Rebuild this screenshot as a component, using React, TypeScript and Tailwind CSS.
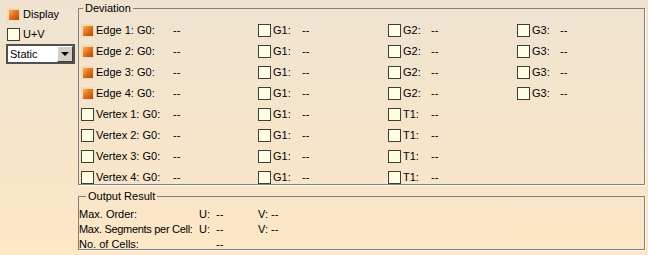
const font = "font-['Liberation_Sans',Arial,sans-serif]";

function Box({ checked = false }: { checked?: boolean }) {
  if (checked)
    return (
      <span className="flex h-[13px] w-[13px] shrink-0 items-center justify-center border border-[#f3d9b6] bg-[#f7e3c6]">
        <span className="h-[11px] w-[11px] bg-linear-to-br from-[#f9b874] via-[#e2761f] to-[#ad4a0e] shadow-[inset_1px_1px_0_#fcd6a8]" />
      </span>
    );
  return <span className="h-[13px] w-[13px] shrink-0 border border-[#3e3e3e] bg-[#ffffe1]" />;
}

function Cell({ label, w, checked }: { label: string; w: string; checked?: boolean }) {
  return (
    <div className="flex h-[21px] items-center">
      <Box checked={checked} />
      <span className={`ml-[2px] ${w}`}>{label}</span>
      <span>--</span>
    </div>
  );
}

const rows = [
  { name: "Edge 1", last: "G3", checked: true },
  { name: "Edge 2", last: "G3", checked: true },
  { name: "Edge 3", last: "G3", checked: true },
  { name: "Edge 4", last: "G3", checked: true },
  { name: "Vertex 1", last: "", checked: false },
  { name: "Vertex 2", last: "", checked: false },
  { name: "Vertex 3", last: "", checked: false },
  { name: "Vertex 4", last: "", checked: false },
];

export default function App() {
  return (
    <div
      className={`flex h-[255px] w-[648px] bg-linear-to-b from-[#efe3d0] to-[#fde7c6] text-[11px] leading-[13px] text-black ${font}`}
    >
      {/* left options */}
      <div className="flex w-[78px] shrink-0 flex-col pl-[7px] pt-[8px]">
        <div className="flex items-center">
          <Box checked />
          <span className="ml-[3px]">Display</span>
        </div>
        <div className="mt-[7px] flex items-center">
          <Box />
          <span className="ml-[3px]">U+V</span>
        </div>
        <div className="mt-[3px] flex h-[20px] w-[69px] -ml-[1px] border-2 border-[#505050] bg-white">
          <span className="flex-1 pl-[2px] leading-[16px]">Static</span>
          <span className="flex w-[16px] items-center justify-center border border-t-white border-l-white border-b-[#404040] border-r-[#404040] bg-[#d4d0c8]">
            <span className="h-0 w-0 border-x-[4px] border-t-[4px] border-x-transparent border-t-black" />
          </span>
        </div>
      </div>

      {/* right groups */}
      <div className="flex flex-1 flex-col pr-[3px]">
        <fieldset className="mt-[2px] h-[183px] border border-[#808080] shadow-[1px_1px_0_#fff]">
          <legend className="ml-[4px] px-[2px]">Deviation</legend>
          <div className="grid grid-cols-[177px_130px_129px_1fr] pl-[2px] pt-[5px]">
            {rows.map((r) => (
              <div key={r.name} className="contents">
                <Cell label={`${r.name}: G0:`} w="w-[77px]" checked={r.checked} />
                <Cell label="G1:" w="w-[29px]" />
                <Cell label={r.last ? "G2:" : "T1:"} w="w-[28px]" />
                {r.last ? <Cell label="G3:" w="w-[28px]" /> : <div />}
              </div>
            ))}
          </div>
        </fieldset>

        <fieldset className="mt-[5px] h-[60px] border border-[#808080] shadow-[1px_1px_0_#fff]">
          <legend className="ml-[7px] px-[2px]">Output Result</legend>
          <div className="flex flex-col whitespace-nowrap pt-[4px]">
            <div className="flex h-[15px] items-center">
              <span className="w-[120px]">Max. Order:</span>
              <span className="w-[17px]">U:</span>
              <span className="w-[42px]">--</span>
              <span className="w-[13px]">V:</span>
              <span>--</span>
            </div>
            <div className="flex h-[15px] items-center">
              <span className="w-[120px] tracking-[-0.3px]">Max. Segments per Cell:</span>
              <span className="w-[17px]">U:</span>
              <span className="w-[42px]">--</span>
              <span className="w-[13px]">V:</span>
              <span>--</span>
            </div>
            <div className="flex h-[15px] items-center">
              <span className="w-[137px]">No. of Cells:</span>
              <span>--</span>
            </div>
          </div>
        </fieldset>
      </div>
    </div>
  );
}
